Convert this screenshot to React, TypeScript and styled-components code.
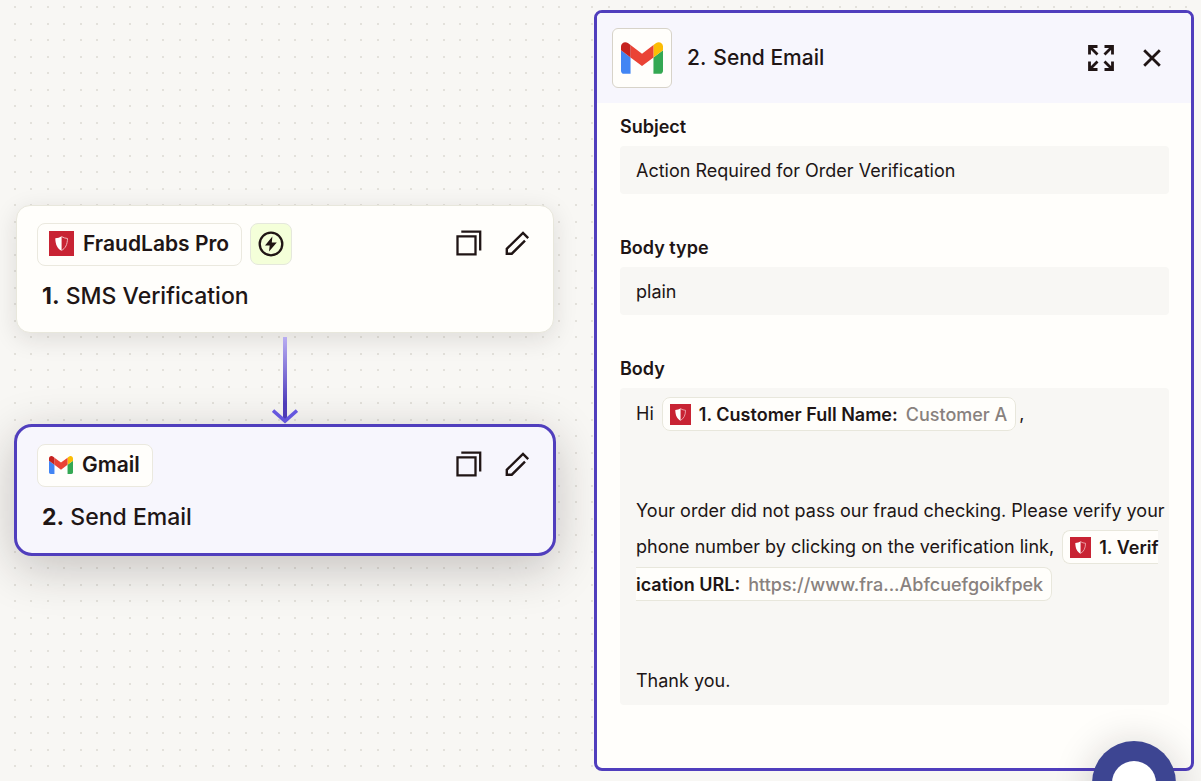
import React from "react";
import styled, { createGlobalStyle } from "styled-components";

const ink = "#201515";
const violet = "#503ebd";

const GlobalStyle = createGlobalStyle`
  *, *::before, *::after { box-sizing: border-box; }
  body {
    margin: 0;
    font-family: Inter, "Liberation Sans", sans-serif;
    color: ${ink};
    background-color: #f8f7f4;
  }
  h2, h3, p { margin: 0; font-weight: inherit; }
`;

const Page = styled.main`
  display: grid;
  grid-template-columns: minmax(0, 1fr) minmax(0, 600px);
  min-height: 100vh;
  padding: 10px 7px 10px 0;
  overflow: hidden;
  background-color: #f8f7f4;
  background-image: radial-gradient(circle at 15px 7px, #e3e1db 1px, transparent 1px),
    radial-gradient(circle at 31px 7px, #e3e1db 1px, transparent 1px),
    radial-gradient(circle at 15px 24px, #e3e1db 1px, transparent 1px),
    radial-gradient(circle at 31px 24px, #e3e1db 1px, transparent 1px);
  background-size: 33px 33px;
`;

const Flow = styled.section`
  display: flex;
  flex-direction: column;
  padding: 195px 38px 0 14px;
`;

const Card = styled.article<{ $selected?: boolean }>`
  margin: 0 ${(p) => (p.$selected ? 0 : 2)}px;
  padding: 17px 20px 20px;
  border: ${(p) => (p.$selected ? `3px solid ${violet}` : "1px solid #e8e7dc")};
  border-radius: ${(p) => (p.$selected ? 18 : 14)}px;
  background: ${(p) => (p.$selected ? "#f7f6fd" : "#fffefb")};
  box-shadow: ${(p) =>
    p.$selected
      ? "0 12px 48px rgba(32, 21, 21, 0.24)"
      : "0 6px 24px rgba(32, 21, 21, 0.12)"};
`;

const CardTop = styled.div`
  display: flex;
  align-items: flex-start;
  gap: 8px;
`;

const AppChip = styled.div`
  display: flex;
  align-items: center;
  gap: 9px;
  height: 43px;
  padding: 0 12px 2px 11px;
  border: 1px solid #ebe9df;
  border-radius: 8px;
  background: #fffefb;
  font-size: 21px;
  line-height: 28px;
  font-weight: 600;
`;

const TriggerBadge = styled.div`
  display: grid;
  place-items: center;
  width: 42px;
  height: 42px;
  border: 1px solid #e5e8dc;
  border-radius: 8px;
  background: #f4ffd9;
`;

const CardActions = styled.div`
  display: flex;
  gap: 23px;
  margin: 7px 3px 0 auto;
`;

const IconButton = styled.button`
  display: grid;
  place-items: center;
  padding: 0;
  border: 0;
  background: none;
  color: ${ink};
  cursor: pointer;
`;

const CardTitle = styled.h3`
  margin: 14px 0 0 5px;
  font-size: 23px;
  line-height: 32px;
  font-weight: 500;

  b { font-weight: 700; }
`;

const Connector = styled.svg`
  display: block;
  align-self: center;
  margin-top: 4px;
`;

const Panel = styled.aside`
  display: flex;
  flex-direction: column;
  border: 3px solid ${violet};
  border-radius: 8px;
  background: #fffefb;
  overflow: hidden;
`;

const PanelHeader = styled.header`
  display: flex;
  align-items: center;
  height: 90px;
  padding: 0 30px 0 15px;
  background: #f7f6fd;
`;

const LogoTile = styled.div`
  display: grid;
  place-items: center;
  width: 60px;
  height: 60px;
  border: 1px solid #d7d3c9;
  border-radius: 6px;
  background: #fffefb;
`;

const PanelTitle = styled.h2`
  display: flex;
  gap: 7px;
  flex: 1;
  margin-left: 15px;
  font-size: 21px;
  line-height: 28px;
  font-weight: 500;
`;

const PanelActions = styled.div`
  display: flex;
  align-items: center;
  gap: 29px;
`;

const Fields = styled.div`
  display: flex;
  flex-direction: column;
  gap: 42px;
  padding: 12px 22px 40px 23px;
`;

const Field = styled.div`
  display: flex;
  flex-direction: column;
  gap: 7px;
`;

const FieldLabel = styled.label`
  font-size: 18px;
  line-height: 24px;
  font-weight: 600;
`;

const TextInput = styled.input`
  width: 100%;
  height: 48px;
  padding: 0 16px;
  border: 0;
  border-radius: 4px;
  background: #f8f7f4;
  color: ${ink};
  font: 400 18px Inter, "Liberation Sans", sans-serif;
`;

const MessageBox = styled.div`
  display: flex;
  flex-direction: column;
  gap: 60px;
  padding: 8px 4px 6px 16px;
  border-radius: 4px;
  background: #f8f7f4;
  font-size: 18px;
  line-height: 36px;
`;

const Token = styled.span`
  margin: 0 3px;
  padding: 6px 8px 5px 7px;
  border: 1px solid #e8e7dc;
  border-radius: 8px;
  background: #fffefb;
  vertical-align: -1px;
  font-weight: 600;

  svg {
    margin-right: 8px;
    vertical-align: -4px;
  }
`;

const TokenValue = styled.span`
  margin-left: 8px;
  color: #88817e;
  font-weight: 500;
`;

const ChatButton = styled.button`
  position: fixed;
  right: 25px;
  bottom: -44px;
  display: grid;
  place-items: center;
  width: 84px;
  height: 84px;
  padding: 0;
  border: 0;
  border-radius: 50%;
  background: #3d4592;
  box-shadow: 0 4px 40px rgba(32, 21, 21, 0.2);
  cursor: pointer;

  &::before {
    content: "";
    width: 44px;
    height: 44px;
    border-radius: 50%;
    background: #fff;
  }
`;

const GmailLogo = ({ width, height }: { width: number; height: number }) => (
  <svg width={width} height={height} viewBox="52 42 88 66" aria-hidden="true">
    <path fill="#4285f4" d="M58 108h14V74L52 59v43c0 3.32 2.69 6 6 6" />
    <path fill="#34a853" d="M120 108h14c3.32 0 6-2.69 6-6V59l-20 15" />
    <path fill="#fbbc04" d="M120 48v26l20-15v-8c0-7.42-8.47-11.65-14.4-7.2" />
    <path fill="#ea4335" d="M72 74V48l24 18 24-18v26L96 92" />
    <path fill="#c5221f" d="M52 51v8l20 15V48l-5.6-4.2c-5.94-4.45-14.4-.22-14.4 7.2" />
  </svg>
);

const FraudLabsLogo = ({ size }: { size: number }) => (
  <svg width={size} height={size} viewBox="0 0 25 25" aria-hidden="true">
    <path fill="#c82333" d="M0 0h25v25H0z" />
    <path fill="#fff" d="M12.6 5.2v14.6C8.6 17.8 6.4 14 6.3 7.2 8.8 7 10.8 6.4 12.6 5.2z" />
    <path
      fill="none"
      stroke="#f3c3c7"
      strokeWidth="0.9"
      d="M12.6 5.6c1.8 1.1 3.7 1.7 5.9 1.9-.1 6.2-2.2 9.9-5.9 11.9"
    />
  </svg>
);

const BoltIcon = () => (
  <svg width="26" height="26" viewBox="0 0 26 26" aria-hidden="true">
    <circle cx="13" cy="13" r="11.3" fill="none" stroke={ink} strokeWidth="2.3" />
    <path fill={ink} d="M14.4 5.6 7 14.4h4.7l-.7 6 7.8-9h-5z" />
  </svg>
);

const CopyIcon = () => (
  <svg width="26" height="26" viewBox="0 0 26 26" fill="none" stroke="currentColor" strokeWidth="2.3" aria-hidden="true">
    <path d="M1.5 6.3h18v18h-18z" />
    <path d="M5.3 1.6h18.9v19" />
  </svg>
);

const PencilIcon = () => (
  <svg width="25" height="25" viewBox="0 0 25 25" fill="none" stroke="currentColor" strokeWidth="2.4" aria-hidden="true">
    <path d="M23.2 7.2 18 2 1.8 17.8v4.9h5L20 9.7" />
  </svg>
);

const ExpandIcon = () => (
  <svg width="26" height="26" viewBox="0 0 26 26" fill="none" stroke="currentColor" strokeWidth="2.8" aria-hidden="true">
    <path d="M9.5 1.5h-8v8M1.5 1.5l8 8M16.5 1.5h8v8M24.5 1.5l-8 8M9.5 24.5h-8v-8M1.5 24.5l8-8M16.5 24.5h8v-8M24.5 24.5l-8-8" />
  </svg>
);

const CloseIcon = () => (
  <svg width="18" height="18" viewBox="0 0 18 18" fill="none" stroke="currentColor" strokeWidth="2.8" aria-hidden="true">
    <path d="m1.2 1.2 15.6 15.6M16.8 1.2 1.2 16.8" />
  </svg>
);

interface StepProps {
  app: string;
  logo: React.ReactNode;
  index: number;
  title: string;
  trigger?: boolean;
  selected?: boolean;
}

const StepCard = ({ app, logo, index, title, trigger, selected }: StepProps) => (
  <Card $selected={selected}>
    <CardTop>
      <AppChip>
        {logo}
        {app}
      </AppChip>
      {trigger && (
        <TriggerBadge>
          <BoltIcon />
        </TriggerBadge>
      )}
      <CardActions>
        <IconButton aria-label={`Copy step ${index}`}>
          <CopyIcon />
        </IconButton>
        <IconButton aria-label={`Rename step ${index}`}>
          <PencilIcon />
        </IconButton>
      </CardActions>
    </CardTop>
    <CardTitle>
      <b>{index}.</b> {title}
    </CardTitle>
  </Card>
);

export default function App() {
  return (
    <>
      <GlobalStyle />
      <Page>
        <Flow>
          <StepCard app="FraudLabs Pro" logo={<FraudLabsLogo size={25} />} index={1} title="SMS Verification" trigger />
          <Connector width="26" height="87" viewBox="0 0 26 87" fill="none" aria-hidden="true">
            <defs>
              <linearGradient id="stem" x1="0" y1="0" x2="0" y2="1">
                <stop offset="0" stopColor="#b9aef2" />
                <stop offset="0.8" stopColor="#503ebd" />
              </linearGradient>
            </defs>
            <path fill="url(#stem)" d="M11 0h4v83h-4z" />
            <path stroke="#695be8" strokeWidth="3.6" d="M1 73.5 13 84l12-10.5" />
          </Connector>
          <StepCard app="Gmail" logo={<GmailLogo width={24} height={18} />} index={2} title="Send Email" selected />
        </Flow>

        <Panel>
          <PanelHeader>
            <LogoTile>
              <GmailLogo width={42} height={32} />
            </LogoTile>
            <PanelTitle>
              <span>2.</span>
              <span>Send Email</span>
            </PanelTitle>
            <PanelActions>
              <IconButton aria-label="Expand panel">
                <ExpandIcon />
              </IconButton>
              <IconButton aria-label="Close panel">
                <CloseIcon />
              </IconButton>
            </PanelActions>
          </PanelHeader>
          <Fields>
            <Field>
              <FieldLabel htmlFor="subject">Subject</FieldLabel>
              <TextInput id="subject" readOnly value="Action Required for Order Verification" />
            </Field>
            <Field>
              <FieldLabel htmlFor="body-type">Body type</FieldLabel>
              <TextInput id="body-type" readOnly value="plain" />
            </Field>
            <Field>
              <FieldLabel as="span" id="body-label">
                Body
              </FieldLabel>
              <MessageBox role="group" aria-labelledby="body-label">
                <p>
                  Hi{" "}
                  <Token>
                    <FraudLabsLogo size={21} />
                    1. Customer Full Name:<TokenValue>Customer A</TokenValue>
                  </Token>
                  ,
                </p>
                <p>
                  Your order did not pass our fraud checking. Please verify your phone number by
                  clicking on the verification link,{" "}
                  <Token>
                    <FraudLabsLogo size={21} />
                    1. Verif
                    <wbr />
                    ication URL:<TokenValue>https://www.fra...Abfcuefgoikfpek</TokenValue>
                  </Token>
                </p>
                <p>Thank you.</p>
              </MessageBox>
            </Field>
          </Fields>
        </Panel>
      </Page>
      <ChatButton aria-label="Open chat" />
    </>
  );
}
